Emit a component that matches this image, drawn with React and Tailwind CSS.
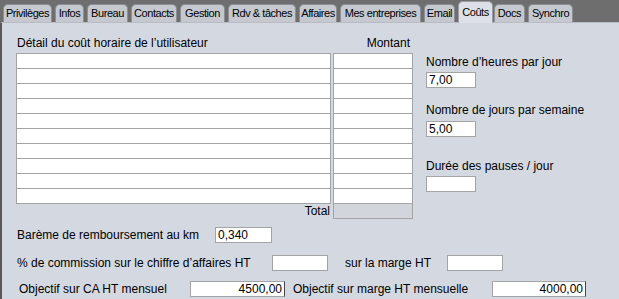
import React from 'react';

const tabs = [
  { label: 'Privilèges', w: 'w-[49px]' },
  { label: 'Infos', w: 'w-[29px]' },
  { label: 'Bureau', w: 'w-[41px]' },
  { label: 'Contacts', w: 'w-[46px]' },
  { label: 'Gestion', w: 'w-[45px]' },
  { label: 'Rdv & tâches', w: 'w-[68px]' },
  { label: 'Affaires', w: 'w-[38px]' },
  { label: 'Mes entreprises', w: 'w-[81px]' },
  { label: 'Email', w: 'w-[31px]' },
  { label: 'Coûts', w: 'w-[35px]', active: true },
  { label: 'Docs', w: 'w-[31px] -ml-[2px]' },
  { label: 'Synchro', w: 'w-[45px]' },
];

const rows = Array.from({ length: 10 }, (_, i) => i);

const Field = ({ className = '', value = '', right = false }) => (
  <div
    className={`h-[16px] bg-white border border-[#a4a4a4] text-[12px] leading-[14px] text-black px-[2px] ${
      right ? 'text-right border-r-[#444]' : ''
    } ${className}`}
  >
    {value}
  </div>
);

export default function App() {
  return (
    <div
      className="w-[619px] h-[299px] bg-[#6e6e6e] flex flex-col overflow-hidden text-black"
      style={{ fontFamily: '"Liberation Sans", Arial, sans-serif' }}
    >
      {/* TABS */}
      <div className="h-[22px] flex items-end gap-[3px] pl-[3px]">
        {tabs.map((t) => (
          <div
            key={t.label}
            className={`${t.w} flex items-center justify-center whitespace-nowrap text-[11px] tracking-[-0.45px] rounded-t-[5px] border border-b-0 ${
              t.active
                ? 'h-[22px] bg-[#dde1e7] border-[#9a9ea4] relative z-10 -mb-[1px]'
                : 'h-[18px] bg-[#c5c9cf] border-[#8c9096]'
            }`}
          >
            {t.label}
          </div>
        ))}
      </div>

      {/* PANEL */}
      <div className="flex-1 bg-[#d4d9e1] border-l-[2px] border-l-[#585858] border-t border-t-[#b9bdc3] pt-[13px] text-[12px] leading-[14px]">
        <div className="flex">
          {/* LEFT TABLE */}
          <div className="ml-[14px] w-[397px]">
            <div className="flex h-[14px]">
              <div className="w-[317px] pl-[1px]">Détail du coût horaire de l’utilisateur</div>
              <div className="w-[77px] text-right">Montant</div>
            </div>
            <div className="flex gap-[2px] mt-[3px]">
              <div className="w-[315px] border-t border-x border-[#a4a4a4]">
                {rows.map((r) => (
                  <div key={r} className="h-[15px] bg-white border-b border-[#a4a4a4]" />
                ))}
              </div>
              <div className="w-[80px] border-t border-x border-[#a4a4a4]">
                {rows.map((r) => (
                  <div key={r} className="h-[15px] bg-white border-b border-[#a4a4a4]" />
                ))}
              </div>
            </div>
            <div className="flex gap-[2px] h-[15px]">
              <div className="w-[315px] text-right pr-[1px] leading-[15px]">Total</div>
              <div className="w-[80px] border-x border-b border-[#a4a4a4] bg-[#d2d6dc]" />
            </div>
          </div>

          {/* RIGHT FIELDS */}
          <div className="ml-[13px] flex flex-col">
            <div className="mt-[19px] h-[14px]">Nombre d’heures par jour</div>
            <Field className="mt-[3px] w-[50px]" value="7,00" />
            <div className="mt-[15px] h-[14px]">Nombre de jours par semaine</div>
            <Field className="mt-[4px] w-[50px]" value="5,00" />
            <div className="mt-[22px] h-[14px]">Durée des pauses / jour</div>
            <Field className="mt-[3px] w-[50px]" />
          </div>
        </div>

        {/* BOTTOM ROWS */}
        <div className="mt-[8px] flex items-center h-[16px]">
          <div className="ml-[15px] w-[198px]">Barème de remboursement au km</div>
          <Field className="w-[57px]" value="0,340" />
        </div>
        <div className="mt-[12px] flex items-center h-[16px]">
          <div className="ml-[15px] w-[255px]">% de commission sur le chiffre d’affaires HT</div>
          <Field className="w-[56px]" />
          <div className="ml-[17px] w-[102px]">sur la marge HT</div>
          <Field className="w-[56px]" />
        </div>
        <div className="mt-[10px] flex items-center h-[16px]">
          <div className="ml-[17px] w-[171px]">Objectif sur CA HT mensuel</div>
          <Field className="w-[95px]" value="4500,00" right />
          <div className="ml-[8px] w-[199px]">Objectif sur marge HT mensuelle</div>
          <Field className="w-[94px]" value="4000,00" right />
        </div>
      </div>
    </div>
  );
}
